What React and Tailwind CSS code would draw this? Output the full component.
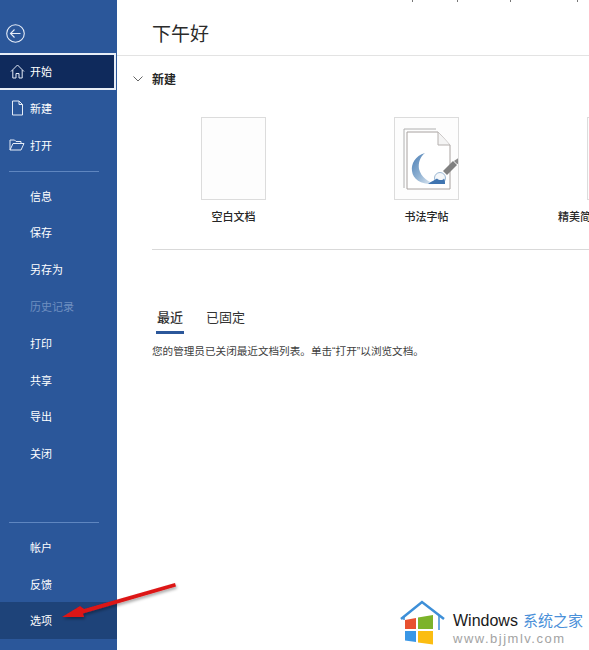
import React from 'react'

const font = { fontFamily: '"Noto Sans CJK SC", "Liberation Sans", sans-serif' }

function NavItem({ icon, label, active, hover, disabled }) {
  return (
    <div
      className={`h-[36.8px] relative flex items-center text-[11px] shrink-0 pl-[30px] ${
        active ? 'bg-[#0f2a5c] border-2 border-[#e8eef7] border-l-0 w-[116px]' : ''
      } ${hover ? 'bg-[#1e4379]' : ''} ${disabled ? 'text-[#6f8fc0]' : 'text-white'}`}
    >
      {icon && <span className="absolute left-[9px] flex items-center justify-center w-[16px] h-[16px]">{icon}</span>}
      {label}
    </div>
  )
}

const HomeIcon = (
  <svg width="15" height="15" viewBox="0 0 15 15" fill="none" stroke="#e6edf8" strokeWidth="1">
    <path d="M1 7.500 7.500 1 14 7.500M2.800 6V14H6V9.500H9V14H12.200V6" />
  </svg>
)
const FileIcon = (
  <svg width="13" height="16" viewBox="0 0 13 16" fill="none" stroke="#e6edf8" strokeWidth="1">
    <path d="M1.500 1H8L11.500 4.500V15H1.500ZM8 1V4.500H11.500" />
  </svg>
)
const FolderIcon = (
  <svg width="16" height="12" viewBox="0 0 16 12" fill="none" stroke="#e6edf8" strokeWidth="1">
    <path d="M1 11V1H5.500L7 2.500H12V4.500M1 11H12L15 4.500H4L1 11" />
  </svg>
)

function Divider({ className }) {
  return <div className={`h-px w-[90px] ml-[9px] bg-[#5f86c0] shrink-0 ${className}`} />
}

function Template({ label, labelClass, children }) {
  return (
    <div className="w-[65px] flex flex-col items-center shrink-0">
      <div className="w-[65px] h-[83px] bg-[#fdfdfd] border border-[#dcdcdc] shrink-0 overflow-hidden">{children}</div>
      <div className={`mt-[9px] text-[11px] font-medium text-[#262626] whitespace-nowrap leading-[14px] ${labelClass || ''}`}>{label}</div>
    </div>
  )
}

export default function App() {
  return (
    <div className="w-[589px] h-[650px] relative flex overflow-hidden bg-white" style={font}>
      {/* left menu */}
      <div className="w-[117px] h-full bg-[#2b579a] flex flex-col shrink-0">
        <div className="h-[53px] shrink-0 pl-[6px] pt-[24px]">
          <svg width="19" height="19" viewBox="0 0 19 19" fill="none" stroke="#e6edf8" strokeWidth="1.100">
            <circle cx="9.500" cy="9.500" r="8.800" />
            <path d="M14.500 9.500H4.500M8.500 5.500 4.500 9.500 8.500 13.500" />
          </svg>
        </div>
        <NavItem icon={HomeIcon} label="开始" active />
        <NavItem icon={FileIcon} label="新建" />
        <NavItem icon={FolderIcon} label="打开" />
        <Divider className="mt-[8px] mb-[5px]" />
        <NavItem label="信息" />
        <NavItem label="保存" />
        <NavItem label="另存为" />
        <NavItem label="历史记录" disabled />
        <NavItem label="打印" />
        <NavItem label="共享" />
        <NavItem label="导出" />
        <NavItem label="关闭" />
        <div className="mt-auto flex flex-col pb-[11px]">
          <Divider className="mb-[6px]" />
          <NavItem label="帐户" />
          <NavItem label="反馈" />
          <NavItem label="选项" hover />
        </div>
      </div>

      {/* main */}
      <div className="flex-1 min-w-0 flex flex-col">
        <div className="h-[56px] shrink-0 border-b border-[#e3e3e3] pl-[35px] pt-[19px] text-[19px] leading-[28px] text-[#2b2b2b]">
          下午好
        </div>
        <div className="pl-[16px] mt-[15px] flex items-center h-[16px]">
          <svg width="10" height="6" viewBox="0 0 10 6" fill="none" stroke="#555" strokeWidth="0.900">
            <path d="M0.500 0.500 5 5 9.500 0.500" />
          </svg>
          <span className="ml-[9px] text-[12px] font-bold text-[#262626]">新建</span>
        </div>
        <div className="ml-[84px] mt-[30px] flex gap-[128px] h-[133px] shrink-0">
          <Template label="空白文档" />
          <Template label="书法字帖">
            <svg width="65" height="83" viewBox="0 0 65 83">
              <defs>
                <linearGradient id="moon" x1="0" y1="0" x2="1" y2="1">
                  <stop offset="0" stopColor="#4a7db4" />
                  <stop offset="0.500" stopColor="#8fb1d2" />
                  <stop offset="1" stopColor="#eef3f8" />
                </linearGradient>
              </defs>
              <path d="M9 70V11H41" fill="none" stroke="#b0b0b0" strokeWidth="1" />
              <path d="M12 71V14H43L55 27V71Z" fill="#fff" stroke="#a8a2a0" strokeWidth="1" />
              <path d="M43 14V27H55" fill="#f4f4f4" stroke="#b5b0ae" strokeWidth="1" />
              <path d="M30 35C20 38 16 46 17 53C18 62 27 67 41 66C33 64 26 59 24 51C23 45 25 39 30 35Z" fill="url(#moon)" />
              <circle cx="45" cy="60" r="5.500" fill="#f4f7fa" stroke="#9db9d4" strokeWidth="1" />
              <path d="M33 66C37 63 40 62 42 60.500C44 62.500 48 62.500 49 60.500C50 62 50 64 50 66Z" fill="#3f74b0" />
              <path d="M48 53 58 43 62 47 52 57Z" fill="#808080" />
              <path d="M59 43 65 39V45L62 46Z" fill="#8a8a8a" />
            </svg>
          </Template>
          <Template label="精美简" labelClass="self-start ml-[-29px]" />
        </div>
        <div className="ml-[35px] h-px bg-[#d9d9d9] shrink-0 mt-[-1px]" />
        <div className="ml-[39px] mt-[57px] flex gap-[22px] text-[13px] text-[#333]">
          <div className="px-[1px] h-[27px] leading-[19px] border-b-[3px] border-[#2b579a] font-medium">最近</div>
          <div className="h-[27px] leading-[19px]">已固定</div>
        </div>
        <div
          className="ml-[35px] mt-[10px] text-[10.6px] leading-[15px] text-[#404040] whitespace-nowrap"
          style={{ fontFamily: '"Liberation Sans", "Noto Sans CJK SC", sans-serif' }}
        >
          您的管理员已关闭最近文档列表。单击“打开”以浏览文档。
        </div>
      </div>

      {/* cut-off text marks at the top edge */}
      <div className="absolute top-0 left-[412px] w-px h-[2px] bg-[#777]" />
      <div className="absolute top-0 left-[457px] w-px h-[2px] bg-[#777]" />
      <div className="absolute top-0 left-[510px] w-px h-[2px] bg-[#777]" />
      <div className="absolute top-0 left-[577px] w-px h-[2px] bg-[#777]" />

      {/* red annotation arrow */}
      <svg className="absolute left-[50px] top-[570px]" width="135" height="60" viewBox="0 0 135 60">
        <defs>
          <filter id="sh" x="-10%" y="-30%" width="120%" height="170%">
            <feDropShadow dx="1" dy="2" stdDeviation="1.500" floodColor="#000" floodOpacity="0.350" />
          </filter>
        </defs>
        <path d="M125 13 34 39 30 36 12 47 34 47 33 43.500 126 16.500Z" fill="#dc1414" filter="url(#sh)" />
      </svg>

      {/* watermark */}
      <div className="absolute right-0 bottom-0 w-[190px] h-[50px] flex items-start">
        <svg width="46" height="46" viewBox="0 0 46 46" className="shrink-0 ml-[1px]">
          <path d="M1 19 22 2 44 19" fill="none" stroke="#3d8fd8" strokeWidth="2.500" />
          <path d="M4 17V20M39 15V30" stroke="#3d8fd8" strokeWidth="1.500" />
          <path d="M5 20 16 18V29H5Z" fill="#e8502f" />
          <path d="M18 17.500 33 15V29H18Z" fill="#7cb32a" />
          <path d="M5 31H16V42L5 40.500Z" fill="#3a97e6" />
          <path d="M18 31H33V44.500L18 42.500Z" fill="#fbbd12" />
        </svg>
        <div className="ml-[7px] mt-[10px] flex flex-col">
          <div className="flex items-baseline whitespace-nowrap leading-[20px]">
            <span className="text-[16px] text-[#1a1a1a]" style={{ fontFamily: '"Liberation Sans", sans-serif' }}>Windows</span>
            <span className="ml-[5px] text-[15px] text-[#4a90d9]">系统之家</span>
          </div>
          <div className="text-[13px] leading-[15px] tracking-[1.500px] text-[#a3a3a3] whitespace-nowrap" style={{ fontFamily: '"Liberation Sans", sans-serif' }}>
            www.bjjmlv.com
          </div>
        </div>
      </div>
    </div>
  )
}
